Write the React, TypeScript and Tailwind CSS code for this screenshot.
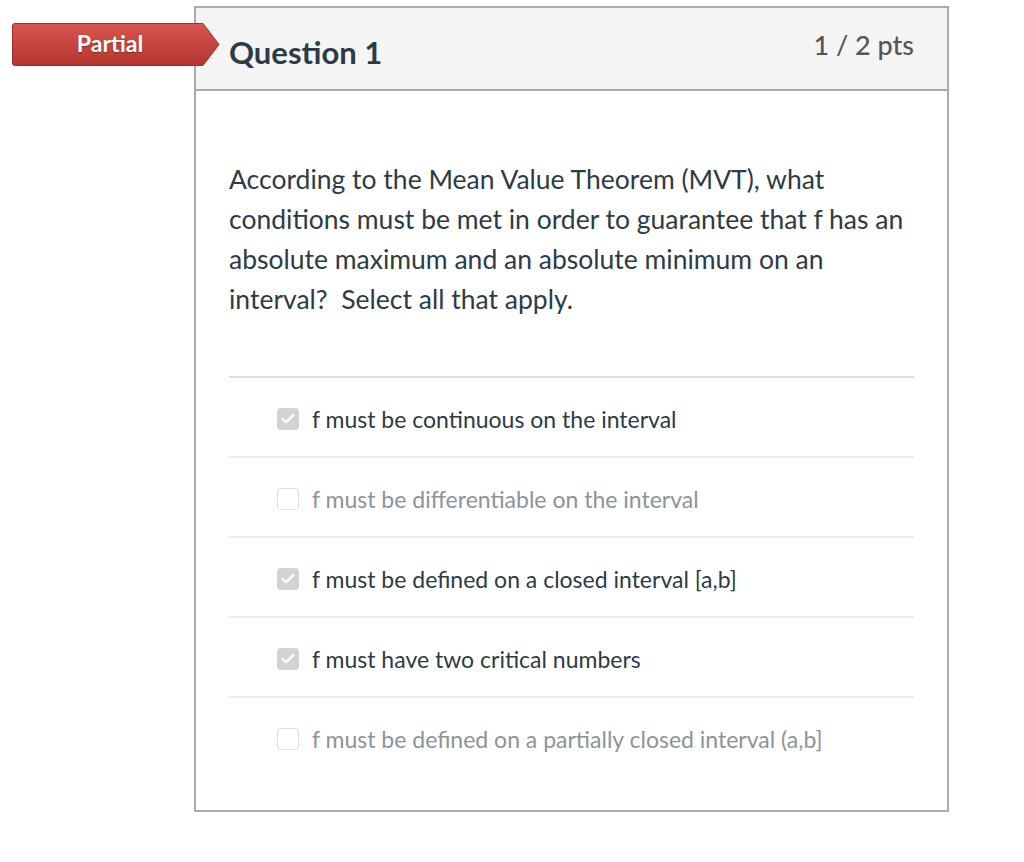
import { Check } from 'lucide-react';

interface Answer {
  text: string;
  checked: boolean;
}

const answers: Answer[] = [
  { text: 'f must be continuous on the interval', checked: true },
  { text: 'f must be differentiable on the interval', checked: false },
  { text: 'f must be defined on a closed interval [a,b]', checked: true },
  { text: 'f must have two critical numbers', checked: true },
  { text: 'f must be defined on a partially closed interval (a,b]', checked: false },
];

function PartialBadge() {
  return (
    <div className="absolute left-[12px] top-[23px] w-[208px] h-[43px]">
      <svg width="208" height="43" viewBox="0 0 208 43" className="absolute inset-0">
        <defs>
          <linearGradient id="badge" x1="0" y1="0" x2="0" y2="1">
            <stop offset="0" stopColor="#d9544f" />
            <stop offset="1" stopColor="#b4352f" />
          </linearGradient>
        </defs>
        <path d="M3 0.5 H191 L207 21.5 L191 42.5 H3 Q0.5 42.5 0.5 40 V3 Q0.5 0.5 3 0.5 Z" fill="url(#badge)" stroke="#a32b26" strokeWidth="1" />
      </svg>
      <div className="relative w-[196px] h-full flex items-center justify-center pb-[2px] text-white font-bold text-[23px] [text-shadow:0_1px_1px_rgba(0,0,0,0.35)]">
        Partial
      </div>
    </div>
  );
}

export default function App() {
  return (
    <div className="relative w-[1024px] h-[862px] bg-white font-['Lato','Open_Sans',sans-serif]">
      <div className="pt-[6px] pl-[194px]">
        <div className="w-[755px] border-2 border-[#ababab] bg-white">
          <div className="h-[83px] bg-[#f5f5f5] border-b-2 border-[#ababab] flex justify-between pl-[33px] pr-[33px]">
            <h2 className="pt-[25px] text-[31px] leading-[38px] font-bold text-[#2d3b45]">Question 1</h2>
            <div className="pt-[20px] text-[27px] leading-[34px] font-medium text-[#555555]">1 / 2 pts</div>
          </div>
          <div className="px-[33px] pt-[68px] pb-[34px]">
            <p className="text-[26.5px] leading-[40px] text-[#2d3b45]">
              According to the Mean Value Theorem (MVT), what conditions must be met in order to guarantee that f has an absolute maximum and an absolute minimum on an interval?&nbsp; Select all that apply.
            </p>
            <div className="mt-[57px]">
              {answers.map((a, i) => (
                <div
                  key={i}
                  className={`h-[80px] flex items-center pt-[4px] pl-[48px] gap-[13px] border-t-2 ${i === 0 ? 'border-[#dcdcdc]' : 'border-[#ececec]'}`}
                >
                  <span
                    className={`w-[22px] h-[22px] rounded-[4px] flex items-center justify-center ${a.checked ? 'bg-[#d3d3d3]' : 'bg-white border border-[#dedede]'}`}
                  >
                    {a.checked && <Check size={16} strokeWidth={3.5} color="#ffffff" />}
                  </span>
                  <span className={`text-[23px] ${a.checked ? 'text-[#2d3b45]' : 'text-[#8b949a]'}`}>{a.text}</span>
                </div>
              ))}
            </div>
          </div>
        </div>
      </div>
      <PartialBadge />
    </div>
  );
}
